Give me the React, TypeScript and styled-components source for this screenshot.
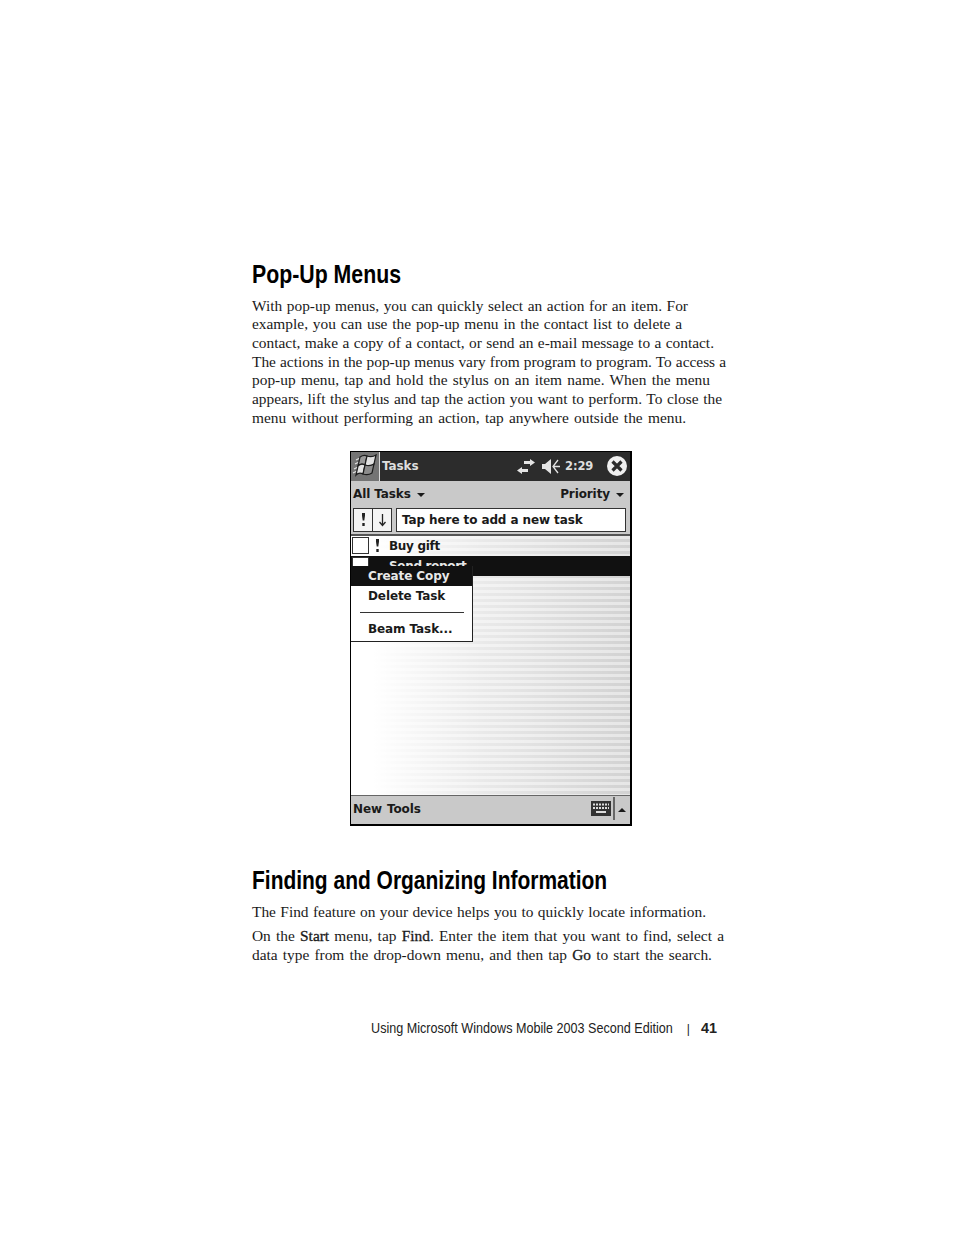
import styled, { createGlobalStyle } from "styled-components";

const Global = createGlobalStyle`
  html, body { margin: 0; padding: 0; background: #fff; }
  #root { width: 954px; height: 1235px; overflow: hidden; }
`;

const Page = styled.div`
  width: 954px;
  height: 1235px;
  box-sizing: border-box;
  padding: 259px 0 0 252px;
  color: #1a1a1a;
  font-family: "Liberation Serif", serif;
`;

const Heading = styled.h2<{ $top?: number; $squeeze: number }>`
  margin: ${(p) => p.$top ?? 0}px 0 0;
  font-family: "Liberation Sans", sans-serif;
  font-size: 25.5px;
  line-height: 31px;
  font-weight: 700;
  color: #000;
  white-space: nowrap;
  transform: scaleX(${(p) => p.$squeeze});
  transform-origin: left center;
`;

const Paragraph = styled.p<{ $top?: number }>`
  margin: ${(p) => p.$top ?? 0}px 0 0;
  font-size: 15.4px;
  line-height: 18.68px;
`;

const Line = styled.span<{ $width: number }>`
  display: block;
  width: ${(p) => p.$width}px;
  text-align: justify;
  text-align-last: justify;
`;

const Term = styled.b`
  font-weight: 400;
  -webkit-text-stroke: 0.3px #1a1a1a;
`;

const Device = styled.div`
  position: relative;
  width: 282px;
  height: 375px;
  margin: 23px 0 0 98px;
  box-sizing: border-box;
  border: 1px solid #000;
  border-right-width: 2px;
  border-bottom-width: 2px;
  display: flex;
  flex-direction: column;
  font-family: "DejaVu Sans", sans-serif;
  font-weight: 700;
  font-size: 12px;
  letter-spacing: -0.1px;
  color: #1a1a1a;
  background: #fff;
`;

const TitleBar = styled.div`
  height: 29px;
  flex: none;
  display: flex;
  align-items: center;
  background: #2c2c2c;
  color: #dedede;
`;

const StartButton = styled.div`
  width: 29px;
  height: 29px;
  box-sizing: border-box;
  background: #747474;
  border-right: 1px solid #dcdcdc;
  display: flex;
  align-items: center;
  justify-content: center;
`;

const TitleText = styled.span`
  margin-left: 2px;
  flex: 1;
`;

const Clock = styled.span`
  width: 27px;
  margin: 0 15px 0 5px;
  font-size: 11.5px;
  white-space: nowrap;
`;

const StatusIcon = styled.svg<{ $gap?: number }>`
  display: block;
  flex: none;
  margin-right: ${(p) => p.$gap ?? 0}px;
`;

const FilterBar = styled.div`
  height: 27px;
  flex: none;
  display: flex;
  align-items: center;
  justify-content: space-between;
  padding: 0 6px 0 2px;
  background: #c9c9c9;
`;

const Filter = styled.span`
  display: flex;
  align-items: center;
  gap: 6px;
`;

const Caret = styled.i<{ $up?: boolean }>`
  display: block;
  width: 0;
  height: 0;
  margin-top: 2px;
  border-left: 4.5px solid transparent;
  border-right: 4.5px solid transparent;
  border-top: ${(p) => (p.$up ? "0" : "4.5px solid #1a1a1a")};
  border-bottom: ${(p) => (p.$up ? "4.5px solid #1a1a1a" : "0")};
`;

const EntryBar = styled.div`
  height: 28px;
  flex: none;
  box-sizing: border-box;
  display: flex;
  align-items: center;
  padding: 0 4px 2px 2px;
  background: #c9c9c9;
  border-bottom: 2px solid #555;
`;

const SortButton = styled.div`
  width: 20px;
  height: 24px;
  box-sizing: border-box;
  border: 1px solid #333;
  background: #f4f4f4;
  margin-right: -1px;
  display: flex;
  align-items: center;
  justify-content: center;
`;

const EntryInput = styled.div`
  flex: 1;
  height: 24px;
  margin-left: 5px;
  box-sizing: border-box;
  border: 1px solid #333;
  background: #fff;
  padding-left: 5px;
  line-height: 23px;
`;

const List = styled.div`
  flex: 1;
  background:
    linear-gradient(90deg, #fff 0%, #fff 8%, rgba(255, 255, 255, 0.55) 45%, rgba(255, 255, 255, 0) 100%),
    repeating-linear-gradient(180deg, #e6e6e6 0 3px, #d2d2d2 3px 6px);
`;

const Row = styled.div<{ $selected?: boolean }>`
  height: 20px;
  box-sizing: border-box;
  display: flex;
  align-items: center;
  padding-left: 1px;
  overflow: hidden;
  background: ${(p) => (p.$selected ? "#111" : "transparent")};
  color: ${(p) => (p.$selected ? "#e8e8e8" : "#1a1a1a")};
`;

const Check = styled.i`
  display: block;
  flex: none;
  width: 15px;
  height: 15px;
  border: 1px solid #333;
  background: #fff;
`;

const RowMark = styled.span`
  width: 17px;
  display: flex;
  justify-content: center;
`;

const RowLabel = styled.span`
  margin-left: 3px;
  letter-spacing: -0.3px;
`;

const PopupMenu = styled.div`
  position: absolute;
  left: 0;
  top: 114px;
  width: 122px;
  height: 76px;
  box-sizing: border-box;
  background: #fff;
  border: 1px solid #222;
  border-left: 0;
  border-top: 0;
`;

const MenuItem = styled.div<{ $active?: boolean }>`
  height: ${(p) => (p.$active ? 20 : 21)}px;
  line-height: ${(p) => (p.$active ? 20 : 21)}px;
  padding-left: 17px;
  background: ${(p) => (p.$active ? "#111" : "transparent")};
  color: ${(p) => (p.$active ? "#e8e8e8" : "#1a1a1a")};
`;

const MenuRule = styled.div`
  height: 1px;
  background: #333;
  margin: 5px 8px 6px 9px;
`;

const BottomBar = styled.div`
  height: 29px;
  flex: none;
  box-sizing: border-box;
  display: flex;
  align-items: center;
  padding: 0 4px 2px 2px;
  background: #c9c9c9;
  border-top: 1px solid #666;
`;

const ToolLabel = styled.span`
  margin-right: 5px;
`;

const Spacer = styled.span`
  flex: 1;
`;

const Divider = styled.i`
  display: block;
  width: 2px;
  height: 23px;
  background: #666;
  margin: 0 3px 0 2px;
`;

const Footer = styled.div`
  width: 465px;
  margin-top: 54px;
  display: flex;
  justify-content: flex-end;
  align-items: baseline;
  font-family: "Liberation Sans", sans-serif;
  font-size: 14.4px;
  line-height: 18px;
  color: #222;
  white-space: nowrap;
`;

const FooterTitle = styled.span`
  display: inline-block;
  transform: scaleX(0.875);
  transform-origin: right center;
`;

const Bar = styled.span`
  margin: 0 11px 0 14px;
  font-size: 12px;
`;

const PageNumber = styled.b`
  font-weight: 700;
`;

function Exclaim() {
  return (
    <svg width="7" height="14" viewBox="0 0 7 14">
      <path d="M2 0h3v2.500l-.7 5h-1.600L2 2.500z" fill="#222" />
      <path d="M2.300 10h2.400v3H2.300z" fill="#222" />
    </svg>
  );
}

function DownArrow() {
  return (
    <svg width="9" height="14" viewBox="0 0 9 14">
      <path d="M4.500 1v11M1.500 9l3 3.500 3-3.500" fill="none" stroke="#222" strokeWidth="1.300" />
    </svg>
  );
}

function Flag() {
  return (
    <svg width="26" height="25" viewBox="0 0 26 25">
      <g stroke="#1c1c1c" strokeWidth="1.200">
        <path d="M8 3c3-2 5-2 7-1l-2 9c-2-1-5-1-7 1z" fill="#9a9a9a" />
        <path d="M15 2c3 1 6 1 9-1l-2 9c-3 2-6 2-9 1z" fill="#e2e2e2" />
        <path d="M6 12c2-2 5-2 7-1l-2 9c-2-1-5-1-7 1z" fill="#e4e4e4" />
        <path d="M13 11c3 1 6 1 9-1l-2 9c-3 2-6 2-9 1z" fill="#8c8c8c" />
      </g>
      <path d="M4 6l3-1.500M3 10l3-1.500M2 15l3-1.500M1 19l3-1.500" stroke="#e4e4e4" strokeWidth="1.200" fill="none" />
    </svg>
  );
}

function SyncIcon() {
  return (
    <StatusIcon $gap={7} width="18" height="15" viewBox="0 0 18 15">
      <path d="M7 2h6V0l5 3.500L13 7V5H7zM11 13H5v2L0 11.500 5 8v2h6z" fill="#e4e4e4" />
    </StatusIcon>
  );
}

function SpeakerIcon() {
  return (
    <StatusIcon width="18" height="17" viewBox="0 0 18 17">
      <path d="M0 6h3l6-5v15l-6-5H0z" fill="#e4e4e4" />
      <path d="M16 2l-5 6.500 5 6.500M12 8.500h6" fill="none" stroke="#e4e4e4" strokeWidth="1.300" />
    </StatusIcon>
  );
}

function CloseIcon() {
  return (
    <StatusIcon $gap={3} width="20" height="20" viewBox="0 0 20 20">
      <circle cx="10" cy="10" r="10" fill="#f0f0f0" />
      <path d="M5.500 5.500l9 9M14.500 5.500l-9 9" stroke="#2c2c2c" strokeWidth="3.200" />
    </StatusIcon>
  );
}

function KeyboardIcon() {
  return (
    <svg width="20" height="15" viewBox="0 0 20 15">
      <rect width="20" height="15" fill="#333" />
      <path d="M2 3.500h16M2 7h16" stroke="#ddd" strokeWidth="2" strokeDasharray="2 1" />
      <path d="M5 11h10" stroke="#ddd" strokeWidth="2" />
    </svg>
  );
}

export default function App() {
  return (
    <>
      <Global />
      <Page>
        <Heading $squeeze={0.835}>Pop-Up Menus</Heading>
        <Paragraph $top={6.7}>
          <Line $width={436}>With pop-up menus, you can quickly select an action for an item. For</Line>
          <Line $width={430}>example, you can use the pop-up menu in the contact list to delete a</Line>
          <Line $width={462}>contact, make a copy of a contact, or send an e-mail message to a contact.</Line>
          <Line $width={474}>The actions in the pop-up menus vary from program to program. To access a</Line>
          <Line $width={458}>pop-up menu, tap and hold the stylus on an item name. When the menu</Line>
          <Line $width={470}>appears, lift the stylus and tap the action you want to perform. To close the</Line>
          <Line $width={434}>menu without performing an action, tap anywhere outside the menu.</Line>
        </Paragraph>

        <Device>
          <TitleBar>
            <StartButton>
              <Flag />
            </StartButton>
            <TitleText>Tasks</TitleText>
            <SyncIcon />
            <SpeakerIcon />
            <Clock>2:29</Clock>
            <CloseIcon />
          </TitleBar>
          <FilterBar>
            <Filter>
              All Tasks <Caret />
            </Filter>
            <Filter>
              Priority <Caret />
            </Filter>
          </FilterBar>
          <EntryBar>
            <SortButton>
              <Exclaim />
            </SortButton>
            <SortButton>
              <DownArrow />
            </SortButton>
            <EntryInput>Tap here to add a new task</EntryInput>
          </EntryBar>
          <List>
            <Row>
              <Check />
              <RowMark>
                <Exclaim />
              </RowMark>
              <RowLabel>Buy gift</RowLabel>
            </Row>
            <Row $selected>
              <Check />
              <RowMark />
              <RowLabel>Send report</RowLabel>
            </Row>
          </List>
          <PopupMenu>
            <MenuItem $active>Create Copy</MenuItem>
            <MenuItem>Delete Task</MenuItem>
            <MenuRule />
            <MenuItem>Beam Task...</MenuItem>
          </PopupMenu>
          <BottomBar>
            <ToolLabel>New</ToolLabel>
            <ToolLabel>Tools</ToolLabel>
            <Spacer />
            <KeyboardIcon />
            <Divider />
            <Caret $up />
          </BottomBar>
        </Device>

        <Heading $top={39} $squeeze={0.822}>Finding and Organizing Information</Heading>
        <Paragraph $top={7}>
          <Line $width={454}>The Find feature on your device helps you to quickly locate information.</Line>
        </Paragraph>
        <Paragraph $top={6}>
          <Line $width={472}>
            On the <Term>Start</Term> menu, tap <Term>Find</Term>. Enter the item that you want to find, select a
          </Line>
          <Line $width={460}>
            data type from the drop-down menu, and then tap <Term>Go</Term> to start the search.
          </Line>
        </Paragraph>
        <Footer>
          <FooterTitle>Using Microsoft Windows Mobile 2003 Second Edition</FooterTitle>
          <Bar>|</Bar>
          <PageNumber>41</PageNumber>
        </Footer>
      </Page>
    </>
  );
}
